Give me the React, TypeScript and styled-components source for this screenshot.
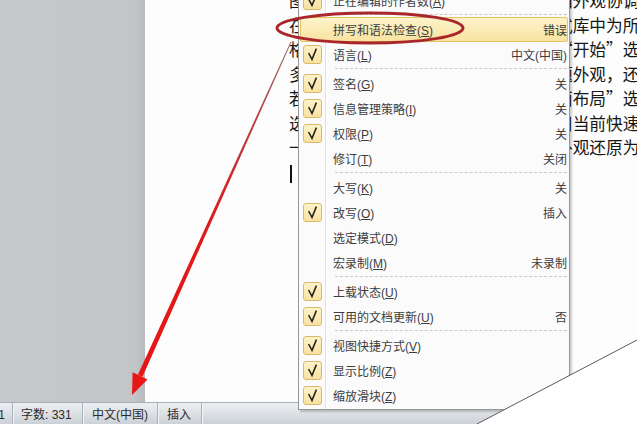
import styled, { createGlobalStyle } from "styled-components";

const GlobalStyle = createGlobalStyle`
  html, body {
    margin: 0;
    padding: 0;
  }
  body {
    width: 637px;
    height: 424px;
    overflow: hidden;
    background: #fff;
  }
`;

const Screen = styled.div`
  position: relative;
  width: 637px;
  height: 424px;
  overflow: hidden;
  display: flex;
  flex-direction: column;
  font-family: "Liberation Sans", "Noto Sans CJK SC", sans-serif;
`;

const Workspace = styled.div`
  flex: 1;
  display: flex;
  min-height: 0;
`;

const Backdrop = styled.div`
  width: 145px;
  flex-shrink: 0;
  background: linear-gradient(to right, #c6c9cb 0, #c3c6c8 134px, #b8bbbd 145px);
`;

const Page = styled.div`
  flex: 1;
  background: #fdfdfd;
  padding-left: 144px;
  overflow: hidden;
`;

const DocText = styled.div`
  margin-top: -12px;
  font-family: "Noto Sans CJK SC", sans-serif;
  font-size: 16.7px;
  line-height: 24.5px;
  color: #161616;
  white-space: nowrap;
  font-feature-settings: "fwid" 1;
  text-spacing-trim: space-all;
`;

const DocLine = styled.div`
  height: 24.5px;
`;

const Caret = styled.span`
  display: inline-block;
  width: 2px;
  height: 18px;
  margin-left: 1px;
  vertical-align: middle;
  background: #111;
`;

const StatusBar = styled.div`
  height: 22px;
  flex-shrink: 0;
  box-sizing: border-box;
  display: flex;
  border-top: 1px solid #a7aeb6;
  background: linear-gradient(#eceff2, #dde1e5 50%, #ccd1d7);
  font-size: 12px;
  color: #2b2b2b;
`;

const StatusItem = styled.div<{ $w: number; $pad: number; $end?: boolean }>`
  width: ${(p) => p.$w}px;
  flex-shrink: 0;
  box-sizing: border-box;
  display: flex;
  align-items: center;
  justify-content: ${(p) => (p.$end ? "flex-end" : "flex-start")};
  padding: ${(p) => (p.$end ? `0 ${p.$pad}px 0 0` : `0 0 0 ${p.$pad}px`)};
  overflow: hidden;
  white-space: nowrap;
  border-right: 1px solid #a9b0b8;
  box-shadow: 1px 0 0 #f3f5f7;
`;

const Menu = styled.div`
  position: absolute;
  left: 298px;
  top: -15.5px;
  width: 272px;
  box-sizing: border-box;
  padding: 2px 1px 1px 1px;
  border: 1px solid #979797;
  background-color: #fbfbfb;
  background-image: linear-gradient(
    to right,
    transparent 26px,
    #e1e1e1 26px,
    #e1e1e1 27px,
    #ffffff 27px,
    #ffffff 28px,
    transparent 28px
  );
  box-shadow: 2px 2px 2px rgba(0, 0, 0, 0.2);
  font-size: 12px;
  color: #3d3d3d;
`;

const Row = styled.div<{ $active?: boolean }>`
  height: 25px;
  box-sizing: border-box;
  display: flex;
  align-items: center;
  white-space: nowrap;
  border: 1px solid ${(p) => (p.$active ? "#e4c366" : "transparent")};
  border-radius: 2px;
  background: ${(p) =>
    p.$active ? "linear-gradient(#fdf3cb, #f8e3a0)" : "transparent"};
`;

const CheckSlot = styled.div`
  width: 32px;
  flex-shrink: 0;
  display: flex;
  align-items: center;
  padding-left: 2px;
  box-sizing: border-box;
`;

const CheckBox = styled.span`
  width: 19px;
  height: 19px;
  box-sizing: border-box;
  display: flex;
  align-items: center;
  justify-content: center;
  border: 1px solid #d8ba6c;
  border-radius: 3px;
  background: linear-gradient(#fdf2c9, #f8e2a0);
`;

const Label = styled.span`
  flex: 1;
`;

const Value = styled.span`
  margin-left: auto;
`;

const Separator = styled.div`
  height: 4px;
  display: flex;
  align-items: center;
  padding: 0 1px 0 35px;
  &::after {
    content: "";
    flex: 1;
    border-top: 1px dashed #c9c9c9;
  }
`;

const Annotations = styled.svg`
  position: absolute;
  left: 0;
  top: 0;
  width: 637px;
  height: 424px;
  pointer-events: none;
`;

type Item =
  | { sep: true }
  | { sep?: false; label: string; key: string; value?: string; checked?: boolean; active?: boolean };

const items: Item[] = [
  { label: "正在编辑的作者数", key: "A", checked: true },
  { sep: true },
  { label: "拼写和语法检查", key: "S", value: "错误", active: true },
  { label: "语言", key: "L", value: "中文(中国)", checked: true },
  { sep: true },
  { label: "签名", key: "G", value: "关", checked: true },
  { label: "信息管理策略", key: "I", value: "关", checked: true },
  { label: "权限", key: "P", value: "关", checked: true },
  { label: "修订", key: "T", value: "关闭" },
  { sep: true },
  { label: "大写", key: "K", value: "关" },
  { label: "改写", key: "O", value: "插入", checked: true },
  { label: "选定模式", key: "D" },
  { label: "宏录制", key: "M", value: "未录制" },
  { sep: true },
  { label: "上载状态", key: "U", checked: true },
  { label: "可用的文档更新", key: "U", value: "否", checked: true },
  { sep: true },
  { label: "视图快捷方式", key: "V", checked: true },
  { label: "显示比例", key: "Z", checked: true },
  { label: "缩放滑块", key: "Z", checked: true },
];

const docLines = [
  "图片、图表或关系图也将与当前的文档外观协调。",
  "在“开始”选项卡上，通过从快速样式库中为所选文本选择",
  "格式。您还可以直接使用功能区中的“开始”选项卡上的",
  "多数控件都允许您选择是使用当前主题外观，还是使用",
  "若要更改文档的整体外观，请在“页面布局”选项卡上选择",
  "选择新的主题元素。要更改外观，可用当前快速样式集命令",
  "一些重置命令，因此您始终可将文档外观还原为当前模板",
];

function Tick() {
  return (
    <svg width="17" height="17" viewBox="0 0 17 17">
      <path d="M4.6 7 L8 13.4 L12.4 2.6" fill="none" stroke="#1f1f1f" strokeWidth="1.5" />
    </svg>
  );
}

export default function App() {
  return (
    <>
      <GlobalStyle />
      <Screen>
        <Workspace>
          <Backdrop />
          <Page>
            <DocText>
              {docLines.map((line, i) => (
                <DocLine key={i}>{line}</DocLine>
              ))}
              <DocLine>
                <Caret />
              </DocLine>
            </DocText>
          </Page>
        </Workspace>
        <StatusBar>
          <StatusItem $w={13} $pad={7} $end>
            页面: 1/1
          </StatusItem>
          <StatusItem $w={70} $pad={8}>
            字数: 331
          </StatusItem>
          <StatusItem $w={75} $pad={9}>
            中文(中国)
          </StatusItem>
          <StatusItem $w={44} $pad={9}>
            插入
          </StatusItem>
        </StatusBar>

        <Menu>
          {items.map((item, i) =>
            item.sep ? (
              <Separator key={i} />
            ) : (
              <Row key={i} $active={item.active}>
                <CheckSlot>
                  {item.checked && (
                    <CheckBox>
                      <Tick />
                    </CheckBox>
                  )}
                </CheckSlot>
                <Label>
                  {item.label}(<u>{item.key}</u>)
                </Label>
                {item.value && <Value>{item.value}</Value>}
              </Row>
            )
          )}
        </Menu>

        <Annotations viewBox="0 0 637 424">
          <defs>
            <linearGradient id="shaft" x1="291" y1="42" x2="140" y2="376" gradientUnits="userSpaceOnUse">
              <stop offset="0" stopColor="#9a6a6a" />
              <stop offset="0.35" stopColor="#c83030" />
              <stop offset="0.6" stopColor="#e21818" />
              <stop offset="1" stopColor="#e81616" />
            </linearGradient>
          </defs>
          <polygon points="477,424 637,340 637,424" fill="#ffffff" />
          <line x1="477" y1="424" x2="637" y2="340" stroke="#5a5a5a" strokeWidth="1" />
          <ellipse cx="370" cy="28" rx="93" ry="15" fill="none" stroke="#a9272b" strokeWidth="3" />
          <polygon
            points="291.4,42.2 290.6,41.8 137.9,374.8 142.5,376.8"
            fill="url(#shaft)"
          />
          <polygon points="147.5,379.5 132.6,372.2 132,395" fill="#e81616" />
        </Annotations>
      </Screen>
    </>
  );
}
